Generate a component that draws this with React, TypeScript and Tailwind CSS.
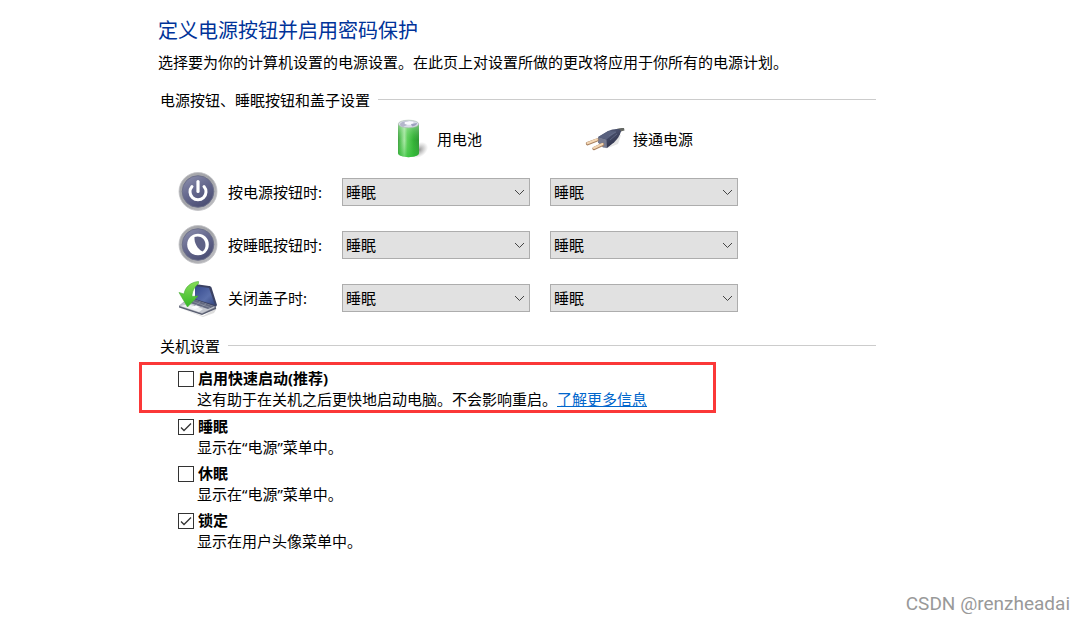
import React, { useState } from "react";

function BatteryIcon() {
  return (
    <svg viewBox="0 0 40 40" className="h-10 w-10 shrink-0" aria-hidden="true">
      <defs>
        <linearGradient id="battery-body" x1="0" x2="1">
          <stop offset="0" stopColor="#3f9a3f" />
          <stop offset="0.12" stopColor="#62c562" />
          <stop offset="0.3" stopColor="#b4ecb0" />
          <stop offset="0.45" stopColor="#5fd05c" />
          <stop offset="0.75" stopColor="#2fae33" />
          <stop offset="1" stopColor="#2d9034" />
        </linearGradient>
        <linearGradient id="battery-fade" x1="0" y1="0" x2="0" y2="1">
          <stop offset="0" stopColor="#d8f5d6" stopOpacity="0.5" />
          <stop offset="0.5" stopColor="#4fc94c" stopOpacity="0.1" />
          <stop offset="1" stopColor="#2fc038" stopOpacity="0.6" />
        </linearGradient>
        <radialGradient id="battery-shadow">
          <stop offset="0" stopColor="#777" stopOpacity="0.8" />
          <stop offset="1" stopColor="#999" stopOpacity="0" />
        </radialGradient>
      </defs>
      <ellipse cx="30" cy="31" rx="10" ry="7" fill="url(#battery-shadow)" transform="rotate(-35 30 31)" />
      <path d="M9 5v29c0 5.500 21 5.500 21 0V5z" fill="url(#battery-body)" />
      <path d="M9 5v29c0 5.500 21 5.500 21 0V5z" fill="url(#battery-fade)" />
      <ellipse cx="19.500" cy="5" rx="10.300" ry="3.800" fill="#d9dce8" stroke="#a5b8aa" strokeWidth="0.600" />
      <path d="M11 5c2-3 7-3 9-3l-2 4-4 2c-2-.500-3-1.500-3-3z" fill="#b4b6cb" />
      <ellipse cx="20" cy="4" rx="4.500" ry="1.800" fill="#fafaff" />
      <path d="M22 5l6-1c0 2-2 3-5 3.500z" fill="#9ea0be" />
    </svg>
  );
}

function PlugIcon() {
  return (
    <svg viewBox="0 0 40 40" className="h-10 w-10 shrink-0" aria-hidden="true">
      <defs>
        <linearGradient id="plug-body" x1="0" y1="0" x2="0.6" y2="1">
          <stop offset="0" stopColor="#626a85" />
          <stop offset="0.5" stopColor="#444a66" />
          <stop offset="1" stopColor="#2d3149" />
        </linearGradient>
      </defs>
      <path d="M20 30l13-5 3-9-3 1-5 8z" fill="#bbb" opacity="0.4" />
      <path d="M30 11c3-2 6-2 9-2l.500 2.500c-3 .500-5 1.500-7 4z" fill="#656863" />
      <path d="M13 18l10-6c4-1.500 8-2.500 12-1.500l1 2c-1 4-4 8-7 11l-7 5.500-7-4z" fill="url(#plug-body)" />
      <path d="M13 18l8.500 2.500.500 8.500-4-.500-5-5z" fill="#777b90" />
      <path d="M13.500 18l10-6 8 .500-10 8z" fill="#59617e" />
      <path d="M24 17l7-4M25 21l7-6" stroke="#69718c" strokeWidth="0.700" />
      <path d="M2.500 24.700l9.500-3.700M9 29.500l8.500-4" stroke="#a98260" strokeWidth="3.400" strokeLinecap="round" />
      <path d="M2.500 24.200l9.500-3.700M9 29l8.500-4" stroke="#f3d6b3" strokeWidth="2" strokeLinecap="round" />
    </svg>
  );
}

function RoundIcon({ id, children }: { id: string; children: React.ReactNode }) {
  return (
    <svg viewBox="0 0 40 40" className="h-10 w-10 shrink-0" aria-hidden="true">
      <defs>
        <linearGradient id={`${id}-rim`} x1="0" y1="0" x2="1" y2="1">
          <stop offset="0" stopColor="#aaabae" />
          <stop offset="0.5" stopColor="#a2a3a8" />
          <stop offset="1" stopColor="#c4c4c8" />
        </linearGradient>
        <linearGradient id={`${id}-face`} x1="0" y1="0" x2="0.6" y2="1">
          <stop offset="0" stopColor="#9093b0" />
          <stop offset="0.5" stopColor="#686b90" />
          <stop offset="1" stopColor="#4c4f75" />
        </linearGradient>
      </defs>
      <circle cx="20" cy="19.500" r="19" fill={`url(#${id}-rim)`} stroke="#c2c2c5" strokeWidth="0.800" />
      <circle cx="20" cy="19.500" r="15.800" fill={`url(#${id}-face)`} stroke="#6b6e88" strokeWidth="0.900" />
      {children}
    </svg>
  );
}

function PowerIcon() {
  return (
    <RoundIcon id="power">
      <path d="M14 14.500a8 8 0 1 0 12 0" fill="none" stroke="#fff" strokeWidth="3" strokeLinecap="round" />
      <path d="M20 9.500v10" stroke="#fff" strokeWidth="3.200" strokeLinecap="round" />
    </RoundIcon>
  );
}

function SleepIcon() {
  return (
    <RoundIcon id="sleep">
      <circle cx="20" cy="19.500" r="10.800" fill="#fff" />
      <path d="M16.500 12c5-2 11 1 11 8 0 3-1 5-3 6.500C19.500 24 16 18 16.500 12z" fill="#5f6286" />
    </RoundIcon>
  );
}

function LidIcon() {
  return (
    <svg viewBox="0 0 40 40" className="h-10 w-10 shrink-0" aria-hidden="true">
      <defs>
        <linearGradient id="lid-screen" x1="0" y1="0" x2="1" y2="1">
          <stop offset="0" stopColor="#34488c" />
          <stop offset="0.6" stopColor="#5a6fab" />
          <stop offset="1" stopColor="#33447c" />
        </linearGradient>
        <linearGradient id="lid-arrow" x1="0" y1="0" x2="0" y2="1">
          <stop offset="0" stopColor="#86dc58" />
          <stop offset="1" stopColor="#35b826" />
        </linearGradient>
      </defs>
      <path d="M2 30l23 8 14-8-3 5-11 4z" fill="#aaa" opacity="0.4" />
      <path d="M17 6l14 2c1 0 2 .500 2.500 1.500L39 27l-2 3.500-20-8z" fill="#3b4263" />
      <path d="M17 8l14 2 6 17-20-6z" fill="url(#lid-screen)" />
      <path d="M11 20l27 9-14 6.500L1 28z" fill="#c4c7cf" stroke="#8a8d99" strokeWidth="0.500" />
      <path d="M14 20.500l22 8-6 2.500-21-7z" fill="#636980" />
      <path d="M12 22.500l20 7M17 21l-6 4M22 24l-6 4M28 26l-5 3" stroke="#969cab" strokeWidth="0.600" />
      <path d="M1 28l23 7.500L38 29v2L24 37 1 29.500z" fill="#5a5f72" />
      <path d="M3 28l7-2 15 5-4 3z" fill="#eceef1" />
      <path d="M13 29.500l5-2 4 1.500-5 2z" fill="#fafbfc" />
      <path d="M20.500 3.500C13 4 7 9 6 16l-5-1.500L9.500 29 20 18l-6 .500c0-5 2-9 6.500-13z" fill="url(#lid-arrow)" stroke="#44ad32" strokeWidth="0.600" />
    </svg>
  );
}

interface PowerSelectProps {
  id: string;
  label?: string;
}

function PowerSelect({ id, label }: PowerSelectProps) {
  const [value, setValue] = useState("睡眠");

  return (
    <div className="relative">
      <select
        id={id}
        aria-label={label}
        value={value}
        onChange={(e) => setValue(e.target.value)}
        className="block h-7 w-full appearance-none rounded-none border border-[#adadad] bg-[#e1e1e1] pl-[3px] pr-6 text-[15px] text-black"
      >
        <option>不采取任何操作</option>
        <option>睡眠</option>
        <option>休眠</option>
        <option>关机</option>
      </select>
      <svg
        viewBox="0 0 12 12"
        className="pointer-events-none absolute right-1 top-2 h-3 w-3"
        fill="none"
        stroke="#444"
        aria-hidden="true"
      >
        <path d="M1 4l4.500 4.500L10 4" />
      </svg>
    </div>
  );
}

interface CheckOptionProps {
  id: string;
  title: string;
  initial?: boolean;
  children: React.ReactNode;
}

function CheckOption({ id, title, initial = false, children }: CheckOptionProps) {
  const [checked, setChecked] = useState(initial);

  return (
    <div>
      <div className="flex items-center gap-1">
        <span className="relative h-4 w-4">
          <input
            id={id}
            type="checkbox"
            checked={checked}
            onChange={(e) => setChecked(e.target.checked)}
            className="peer block h-4 w-4 appearance-none border border-[#333] bg-white"
          />
          <svg
            viewBox="0 0 16 16"
            className="pointer-events-none absolute inset-0 hidden h-4 w-4 peer-checked:block"
            fill="none"
            stroke="#333"
            strokeWidth="1.300"
            aria-hidden="true"
          >
            <path d="M3 8.500l3 3L13 4.500" />
          </svg>
        </span>
        <label htmlFor={id} className="font-bold">
          {title}
        </label>
      </div>
      <p className="pl-[19px]">{children}</p>
    </div>
  );
}

function SectionTitle({ children }: { children: React.ReactNode }) {
  return (
    <div className="flex items-center gap-2 pl-[21px]">
      <h2>{children}</h2>
      <div className="mb-0.5 h-px flex-1 bg-[#cccccc]" />
    </div>
  );
}

const rows = [
  { id: "power-button", label: "按电源按钮时:", icon: <PowerIcon /> },
  { id: "sleep-button", label: "按睡眠按钮时:", icon: <SleepIcon /> },
  { id: "lid", label: "关闭盖子时:", icon: <LidIcon /> },
];

export default function App() {
  return (
    <div className="flex min-h-screen flex-col bg-white font-['Noto_Sans','Noto_Sans_CJK_SC',sans-serif] text-[15px] leading-[21px] text-black">
      <main className="pl-[139px] pr-[209px] pt-[17px]">
        <div className="pl-[19px]">
          <h1 className="text-xl leading-7 text-[#003399]">定义电源按钮并启用密码保护</h1>
          <p className="mt-[7px]">
            选择要为你的计算机设置的电源设置。在此页上对设置所做的更改将应用于你所有的电源计划。
          </p>
        </div>

        <section className="mt-[17px]">
          <SectionTitle>电源按钮、睡眠按钮和盖子设置</SectionTitle>
          <div className="mt-2 grid grid-cols-[164px_188px_188px] items-center gap-y-[13px] pl-[39px]">
            <div className="col-start-2 flex items-center gap-2 pl-[47px]">
              <BatteryIcon />
              <span>用电池</span>
            </div>
            <div className="ml-5 flex items-center gap-2 whitespace-nowrap pl-[35px]">
              <PlugIcon />
              <span>接通电源</span>
            </div>
            {rows.map((row) => (
              <React.Fragment key={row.id}>
                <label htmlFor={`${row.id}-battery`} className="flex items-center gap-[10px]">
                  {row.icon}
                  {row.label}
                </label>
                <PowerSelect id={`${row.id}-battery`} />
                <div className="-mr-5 pl-5">
                  <PowerSelect id={`${row.id}-ac`} label={`${row.label} 接通电源`} />
                </div>
              </React.Fragment>
            ))}
          </div>
        </section>

        <section className="mt-[18px]">
          <SectionTitle>关机设置</SectionTitle>
          <div className="mt-[5px] max-w-[577px] border-[3px] border-[#fb3838] pl-9 pt-[3px]">
            <CheckOption id="fast-startup" title="启用快速启动(推荐)">
              这有助于在关机之后更快地启动电脑。不会影响重启。
              <a href="#" className="text-[#0066cc] underline">
                了解更多信息
              </a>
            </CheckOption>
          </div>
          <div className="mt-[3px] flex flex-col gap-[5px] pl-[39px]">
            <CheckOption id="sleep" title="睡眠" initial>
              显示在“电源”菜单中。
            </CheckOption>
            <CheckOption id="hibernate" title="休眠">
              显示在“电源”菜单中。
            </CheckOption>
            <CheckOption id="lock" title="锁定" initial>
              显示在用户头像菜单中。
            </CheckOption>
          </div>
        </section>
      </main>

      <footer className="mt-auto pb-[6px] pr-[15px] text-right font-['Roboto',sans-serif] text-[19px] leading-[22px] text-[#999999]">
        CSDN @renzheadai
      </footer>
    </div>
  );
}
